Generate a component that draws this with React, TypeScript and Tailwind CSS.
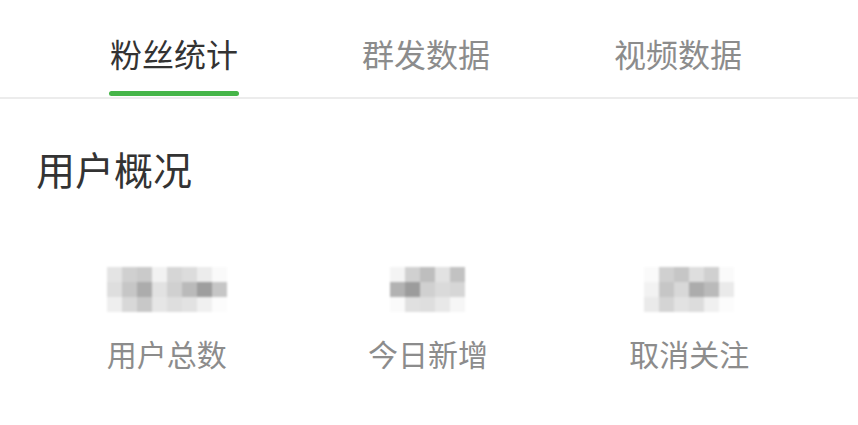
import React from 'react';

const tabs = ['粉丝统计', '群发数据', '视频数据'];

// pixelated (mosaic) placeholders for the hidden numbers
const stats = [
  {
    label: '用户总数',
    cells: [
      ['bg-[#e4e4e4]', 'bg-[#d0d0d0]', 'bg-[#cacaca]', 'bg-[#f2f2f2]', 'bg-[#d6d6d6]', 'bg-[#dcdcdc]', 'bg-[#ececec]', 'bg-[#fafafa]'],
      ['bg-[#dedede]', 'bg-[#c6c6c6]', 'bg-[#acacac]', 'bg-[#e2e2e2]', 'bg-[#d0d0d0]', 'bg-[#bababa]', 'bg-[#9e9e9e]', 'bg-[#c6c6c6]'],
      ['bg-[#eeeeee]', 'bg-[#d8d8d8]', 'bg-[#c8c8c8]', 'bg-[#e6e6e6]', 'bg-[#dedede]', 'bg-[#e2e2e2]', 'bg-[#f0f0f0]', 'bg-[#fcfcfc]'],
    ],
  },
  {
    label: '今日新增',
    cells: [
      ['bg-[#f4f4f4]', 'bg-[#d0d0d0]', 'bg-[#bebebe]', 'bg-[#e2e2e2]', 'bg-[#c2c2c2]'],
      ['bg-[#b2b2b2]', 'bg-[#9c9c9c]', 'bg-[#d0d0d0]', 'bg-[#dadada]', 'bg-[#d6d6d6]'],
      ['bg-[#fafafa]', 'bg-[#e0e0e0]', 'bg-[#dedede]', 'bg-[#e8e8e8]', 'bg-[#f6f6f6]'],
    ],
  },
  {
    label: '取消关注',
    cells: [
      ['bg-[#fafafa]', 'bg-[#d0d0d0]', 'bg-[#c6c6c6]', 'bg-[#dedede]', 'bg-[#d0d0d0]', 'bg-[#fafafa]'],
      ['bg-[#f2f2f2]', 'bg-[#c6c6c6]', 'bg-[#d8d8d8]', 'bg-[#acacac]', 'bg-[#bababa]', 'bg-[#eaeaea]'],
      ['bg-[#eaeaea]', 'bg-[#d4d4d4]', 'bg-[#e2e2e2]', 'bg-[#dcdcdc]', 'bg-[#f0f0f0]', 'bg-[#fcfcfc]'],
    ],
  },
];

export default function App() {
  return (
    <div
      className="w-[858px] h-[425px] bg-white overflow-hidden"
      style={{ fontFamily: '"Noto Sans CJK SC", "Noto Sans", sans-serif' }}
    >
      {/* Tabs */}
      <div className="grid grid-cols-3 pl-[48px] pr-[54px] pt-[37px] border-b-2 border-[#ececec]">
        {tabs.map((t, i) => (
          <div key={t} className="flex flex-col items-center">
            <span className={`text-[32px] leading-none ${i === 0 ? 'text-[#333333]' : 'text-[#8c8c8c]'}`}>{t}</span>
            <div className={`mt-[22px] w-[130px] h-[5px] rounded-full ${i === 0 ? 'bg-[#45b548]' : 'bg-transparent'}`} />
            <div className="h-[1px]" />
          </div>
        ))}
      </div>

      {/* Overview */}
      <h2 className="mt-[50px] pl-[36px] text-[39px] leading-none text-[#333333] font-normal">用户概况</h2>

      <div className="grid grid-cols-3 pl-[36px] pr-[38px] mt-[79px]">
        {stats.map((s) => (
          <div key={s.label} className="flex flex-col items-center">
            <div className="flex flex-col blur-[1px]">
              {s.cells.map((row, r) => (
                <div key={r} className="flex">
                  {row.map((c, j) => (
                    <div key={j} className={`w-[15px] h-[15px] ${c}`} />
                  ))}
                </div>
              ))}
            </div>
            <span className="mt-[26px] text-[30px] leading-none text-[#8c8c8c]">{s.label}</span>
          </div>
        ))}
      </div>
    </div>
  );
}
